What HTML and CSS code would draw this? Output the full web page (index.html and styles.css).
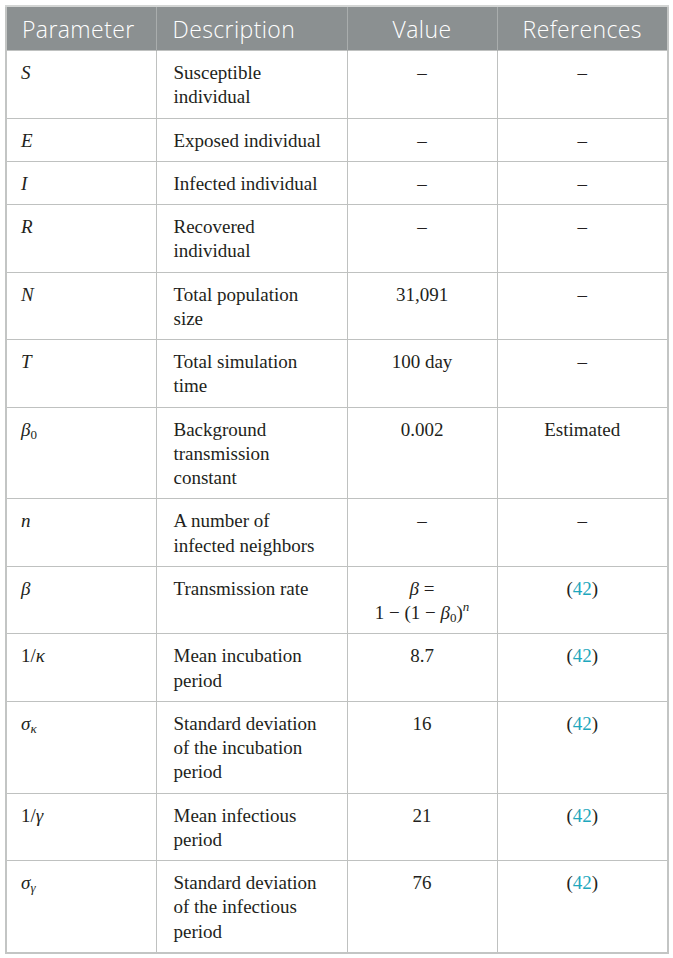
FILE: index.html
```html
<!DOCTYPE html>
<html>
<head>
<meta charset="utf-8">
<link rel="stylesheet" href="styles.css">
</head>
<body>
<table class="params">
  <colgroup>
    <col class="c1"><col class="c2"><col class="c3"><col class="c4">
  </colgroup>
  <thead>
    <tr>
      <th class="left">Parameter</th>
      <th class="left">Description</th>
      <th>Value</th>
      <th>References</th>
    </tr>
  </thead>
  <tbody>
    <tr><td class="sym"><i>S</i></td><td>Susceptible<br>individual</td><td class="ctr">–</td><td class="ctr">–</td></tr>
    <tr><td class="sym"><i>E</i></td><td>Exposed individual</td><td class="ctr">–</td><td class="ctr">–</td></tr>
    <tr><td class="sym"><i>I</i></td><td>Infected individual</td><td class="ctr">–</td><td class="ctr">–</td></tr>
    <tr><td class="sym"><i>R</i></td><td>Recovered<br>individual</td><td class="ctr">–</td><td class="ctr">–</td></tr>
    <tr><td class="sym"><i>N</i></td><td>Total population<br>size</td><td class="ctr">31,091</td><td class="ctr">–</td></tr>
    <tr><td class="sym"><i>T</i></td><td>Total simulation<br>time</td><td class="ctr">100 day</td><td class="ctr">–</td></tr>
    <tr><td class="sym"><i>β</i><sub>0</sub></td><td>Background<br>transmission<br>constant</td><td class="ctr">0.002</td><td class="ctr">Estimated</td></tr>
    <tr><td class="sym"><i>n</i></td><td>A number of<br>infected neighbors</td><td class="ctr">–</td><td class="ctr">–</td></tr>
    <tr><td class="sym"><i>β</i></td><td>Transmission rate</td><td class="ctr"><i>β</i> =<br>1 − (1 − <i>β</i><sub>0</sub>)<sup><i>n</i></sup></td><td class="ctr">(<span class="ref">42</span>)</td></tr>
    <tr><td class="sym">1/<i>κ</i></td><td>Mean incubation<br>period</td><td class="ctr">8.7</td><td class="ctr">(<span class="ref">42</span>)</td></tr>
    <tr><td class="sym"><i>σ</i><sub><i>κ</i></sub></td><td>Standard deviation<br>of the incubation<br>period</td><td class="ctr">16</td><td class="ctr">(<span class="ref">42</span>)</td></tr>
    <tr><td class="sym">1/<i>γ</i></td><td>Mean infectious<br>period</td><td class="ctr">21</td><td class="ctr">(<span class="ref">42</span>)</td></tr>
    <tr><td class="sym"><i>σ</i><sub><i>γ</i></sub></td><td>Standard deviation<br>of the infectious<br>period</td><td class="ctr">76</td><td class="ctr">(<span class="ref">42</span>)</td></tr>
  </tbody>
</table>
</body>
</html>
```

FILE: styles.css
```css
html, body {
  margin: 0;
  padding: 0;
  background: #ffffff;
}

.params {
  margin: 5px 0 0 5px;
  width: 662px;
  table-layout: fixed;
  border-collapse: collapse;
  border: 2px solid #c3c5c4;
  font-family: "Liberation Serif", "Times New Roman", serif;
  font-size: 19px;
  color: #231f20;
}

.c1 { width: 150px; }
.c2 { width: 191px; }
.c3 { width: 150px; }
.c4 { width: 171px; }

.params th {
  background: #8b9091;
  color: #ffffff;
  font-family: "Open Sans", "Noto Sans", sans-serif;
  font-weight: 300;
  font-size: 23px;
  letter-spacing: 0.4px;
  line-height: 26px;
  height: 43px;
  padding: 0 16px;
  text-align: center;
  vertical-align: middle;
  border-left: 1px solid #a9adad;
  border-top: 2px solid #d3d5d4;
}

.params th.left {
  text-align: left;
}

.params th:first-child {
  border-left: 2px solid #c3c5c4;
  padding-left: 15px;
}

.params td {
  border: 1px solid #bfc1c0;
  padding: 10px 16px 8px 17px;
  line-height: 24.25px;
  vertical-align: top;
  text-align: left;
}

.params td.sym {
  padding-left: 14px;
}

.params td.ctr {
  text-align: center;
  padding-left: 8px;
  padding-right: 8px;
}

.params i {
  font-style: italic;
}

.params sub {
  font-size: 13px;
  vertical-align: -3px;
  line-height: 0;
}

.params sup {
  font-size: 13px;
  vertical-align: 8px;
  line-height: 0;
}

.ref {
  color: #1ea7bd;
}
```
